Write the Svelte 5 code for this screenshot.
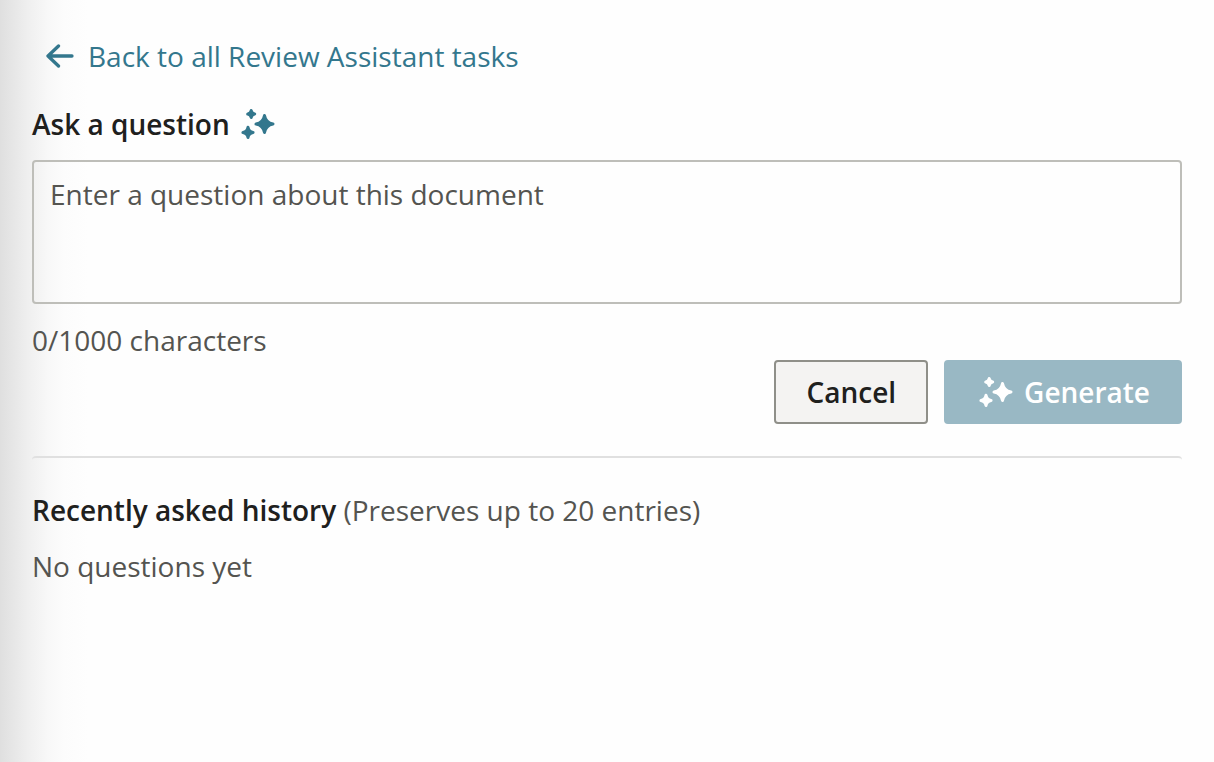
<script>
  let question = $state('');
  const limit = 1000;
</script>

{#snippet sparkles()}
  <svg class="sparkles" viewBox="0 0 36 32" width="36" height="32" aria-hidden="true">
    <g fill="currentColor" stroke="currentColor" stroke-width="3" stroke-linejoin="round">
      <path d="M24.5 7.5 Q25.8 14.7 33 16 Q25.8 17.3 24.5 24.5 Q23.2 17.3 16 16 Q23.2 14.7 24.5 7.5Z" />
      <path d="M11.2 2.5 Q11.7 5.5 14.7 6 Q11.7 6.5 11.2 9.5 Q10.7 6.5 7.7 6 Q10.7 5.5 11.2 2.5Z" />
      <path d="M8 19.3 Q8.7 23.7 13.1 24.4 Q8.7 25.1 8 29.5 Q7.3 25.1 2.9 24.4 Q7.3 23.7 8 19.3Z" />
    </g>
  </svg>
{/snippet}

<main>
  <nav>
    <a href="#tasks">
      <svg class="arrow" viewBox="0 0 28 24" width="28" height="24" aria-hidden="true">
        <path
          d="M12.5 2 L2 12 L12.5 22 M2 12 H26"
          fill="none"
          stroke="currentColor"
          stroke-width="3.3"
          stroke-linecap="round"
          stroke-linejoin="round"
        />
      </svg>
      <span>Back to all Review Assistant tasks</span>
    </a>
  </nav>

  <form onsubmit={(e) => e.preventDefault()}>
    <label for="question">Ask a question {@render sparkles()}</label>
    <textarea
      id="question"
      maxlength={limit}
      placeholder="Enter a question about this document"
      bind:value={question}
    ></textarea>
    <p class="count">{question.length}/{limit} characters</p>
    <div class="actions">
      <button type="button" class="cancel" onclick={() => (question = '')}>Cancel</button>
      <button type="submit" class="generate" disabled={!question.length}>
        {@render sparkles()}
        Generate
      </button>
    </div>
  </form>

  <section>
    <h2>Recently asked history <span>(Preserves up to 20 entries)</span></h2>
    <p>No questions yet</p>
  </section>
</main>

<style>
  :global(body) {
    background: #fefefe;
  }

  main {
    box-sizing: border-box;
    min-height: 100vh;
    padding: 36px 32px;
    background: linear-gradient(
      to right,
      #dfdfdf 0,
      #e7e7e7 14px,
      #efefef 28px,
      #f8f8f8 48px,
      #fcfcfc 64px,
      #fefefe 88px
    );
    color: #545450;
    font: 400 28px/40px 'Open Sans', 'Noto Sans', sans-serif;
  }

  a {
    display: inline-flex;
    align-items: center;
    gap: 14px;
    margin-left: 14px;
    color: #33778d;
    text-decoration: none;
    vertical-align: top;
  }

  form {
    display: flex;
    flex-direction: column;
    margin-top: 28px;
    padding-bottom: 32px;
  }

  label {
    display: flex;
    align-items: center;
    gap: 10px;
    color: #20201d;
    font-weight: 600;
  }

  .sparkles {
    flex: none;
  }

  label :global(.sparkles) {
    color: #33778d;
  }

  textarea {
    box-sizing: border-box;
    width: 100%;
    height: 144px;
    margin: 16px 0;
    padding: 12px 16px;
    border: 2px solid #bebeb9;
    border-radius: 4px;
    background: transparent;
    color: #20201d;
    font: inherit;
    resize: none;
  }

  textarea::placeholder {
    color: #545450;
    opacity: 1;
  }

  p {
    margin: 0;
  }

  .actions {
    display: flex;
    justify-content: flex-end;
    gap: 16px;
  }

  button {
    display: flex;
    align-items: center;
    gap: 10px;
    padding: 10px 30px;
    border: 2px solid;
    border-radius: 4px;
    font: inherit;
    font-weight: 600;
  }

  .cancel {
    border-color: #8f8f89;
    background: #f4f3f2;
    color: #20201d;
  }

  .generate {
    padding-left: 32px;
    border-color: #99b8c4;
    background: #99b8c4;
    color: #fff;
  }

  section {
    padding-top: 32px;
    border-top: 2px solid #e0e0e0;
    border-radius: 4px;
  }

  h2 {
    margin: 0 0 16px;
    color: #20201d;
    font: inherit;
    font-weight: 600;
  }

  h2 span {
    color: #545450;
    font-weight: 400;
  }
</style>
